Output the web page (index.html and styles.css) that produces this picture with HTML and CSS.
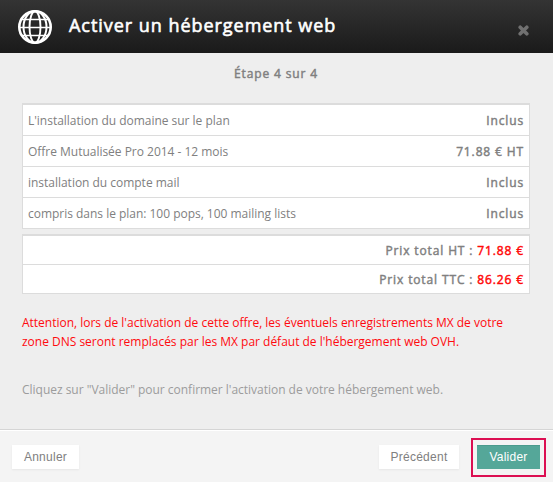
FILE: index.html
```html
<!DOCTYPE html>
<html lang="fr">
<head>
<meta charset="utf-8">
<title>Activer un hébergement web</title>
<link rel="stylesheet" href="styles.css">
</head>
<body>
<div class="dialog">
  <header class="header">
    <svg class="globe" viewBox="0 0 36 36" fill="none" stroke="#fff" stroke-width="2.6">
      <circle cx="18" cy="18" r="15.7"/>
      <ellipse cx="18" cy="18" rx="5.5" ry="15.7" stroke-width="1.9"/>
      <ellipse cx="18" cy="18" rx="11.5" ry="15.7" stroke-width="2"/>
      <path d="M2 18.5h32M5 10.5h26M5 26.5h26" stroke-width="1.6"/>
    </svg>
    <h1 class="title">Activer un hébergement web</h1>
    <svg class="close" viewBox="0 0 10 10" stroke="#707070" stroke-width="3.3" stroke-linecap="round"><path d="M2 2l6 6M8 2l-6 6"/></svg>
  </header>
  <main class="content">
    <div class="step strong">Étape 4 sur 4</div>
    <div class="list">
      <div class="row"><span>L'installation du domaine sur le plan</span><span class="strong">Inclus</span></div>
      <div class="row"><span>Offre Mutualisée Pro 2014 - 12 mois</span><span class="strong">71.88 € HT</span></div>
      <div class="row"><span>installation du compte mail</span><span class="strong">Inclus</span></div>
      <div class="row"><span>compris dans le plan: 100 pops, 100 mailing lists</span><span class="strong">Inclus</span></div>
    </div>
    <div class="list totals">
      <div class="row strong"><span>Prix total HT : <span class="price">71.88 €</span></span></div>
      <div class="row strong"><span>Prix total TTC : <span class="price">86.26 €</span></span></div>
    </div>
    <p class="warning">Attention, lors de l'activation de cette offre, les éventuels enregistrements MX de votre<br>zone DNS seront remplacés par les MX par défaut de l'hébergement web OVH.</p>
    <p class="hint">Cliquez sur "Valider" pour confirmer l'activation de votre hébergement web.</p>
  </main>
  <footer class="footer">
    <button class="btn cancel">Annuler</button>
    <button class="btn previous">Précédent</button>
    <div class="highlight"><button class="btn primary">Valider</button></div>
  </footer>
</div>
</body>
</html>
```
FILE: styles.css
```css
* { box-sizing: border-box; }
body { margin: 0; background: #eee; color: #808080; font: 12px/18px "Open Sans", sans-serif; }
.dialog { width: 553px; height: 482px; display: flex; flex-direction: column; overflow: hidden; white-space: nowrap; }
.header { height: 53px; flex: none; display: flex; align-items: center; padding: 0 24px 0 17px; background: linear-gradient(#343434, #1a1a1a); }
.globe { width: 36px; height: 36px; }
.title { margin: 0 auto 3px 16px; color: #fff; font-size: 18px; font-weight: 400; line-height: 24px; letter-spacing: .96px; -webkit-text-stroke: .6px #fff; }
.close { width: 11px; height: 11px; margin-top: 7px; }
.content { flex: 1; padding: 12px 23px 0 22px; }
.strong { letter-spacing: .87px; -webkit-text-stroke: .45px currentColor; }
.step { text-align: center; height: 18px; margin-bottom: 20px; }
.list { background: #fff; border: 1px solid #dcdcdc; border-top-width: 2px; margin-bottom: 5px; }
.row { height: 31px; display: flex; justify-content: space-between; align-items: center; padding: 2px 5px 0; border-bottom: 1px solid #dcdcdc; letter-spacing: -.02px; }
.row:last-child { border-bottom: 0; height: 30px; }
.row.strong { letter-spacing: .87px; }
.totals .row { height: 29px; justify-content: flex-end; padding-right: 5px; }
.totals .row:last-child { height: 28px; }
.price { color: #ff0808; }
.warning { margin: 19px 0 0; color: #ff0a0f; line-height: 19px; letter-spacing: -.01px; }
.hint { margin: 29px 0 0; color: #9c9c9c; line-height: 20px; letter-spacing: -.02px; }
.footer { height: 53px; flex: none; display: flex; align-items: center; padding: 0 7px 0 12px; border-top: 1px solid #d5d5d5; box-shadow: inset 0 1px #fff; background: #f4f4f4; }
.btn { height: 24px; border: 0; padding: 0; background: #fff; color: #808080; font: 12px/24px "Liberation Sans", sans-serif; letter-spacing: .25px; box-shadow: 0 1px 2px rgba(0,0,0,.06); }
.cancel { width: 67px; margin: 1px auto 0 0; }
.previous { width: 80px; margin: 1px 12px 0 0; }
.highlight { width: 75px; height: 39px; margin-top: 2px; display: flex; align-items: center; justify-content: center; border: 2px solid #dc0f52; }
.primary { width: 63px; margin-top: -1px; background: #55a799; color: #fff; box-shadow: inset 0 1px #4a9b8d; }
```
